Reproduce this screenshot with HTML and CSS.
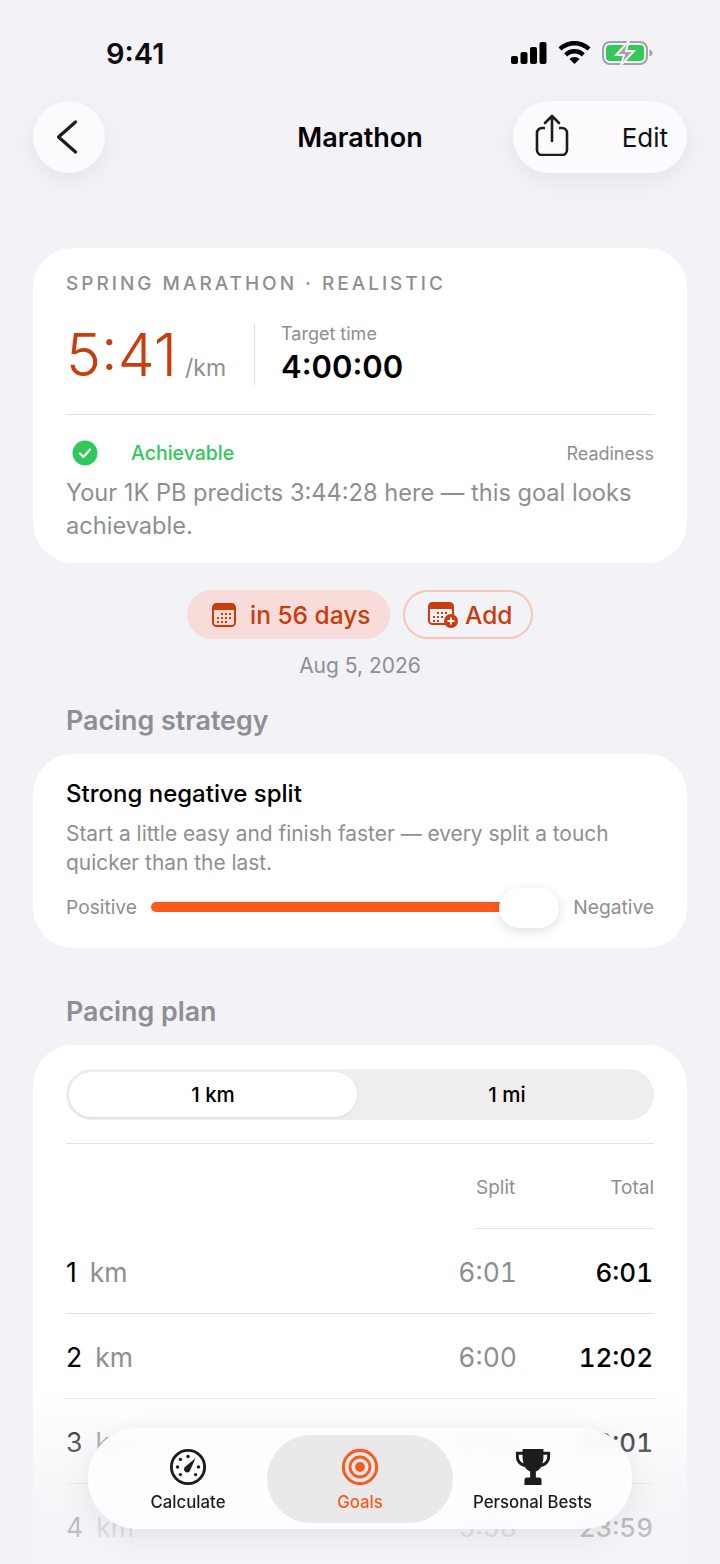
FILE: index.html
```html
<!DOCTYPE html>
<html lang="en">
<head>
<meta charset="UTF-8">
<meta name="viewport" content="width=device-width, initial-scale=1.0">
<title>Marathon</title>
<link rel="stylesheet" href="styles.css">
</head>
<body>
<div id="screen">

    <!-- status bar -->
    <div class="status">
        <span class="clock">9:41</span>
        <div class="status-icons">
            <svg width="36" height="22" viewBox="0 0 36 22"><rect x="0" y="14" width="7" height="8" rx="2"/><rect x="9.500" y="10" width="7" height="12" rx="2"/><rect x="19" y="5" width="7" height="17" rx="2"/><rect x="28.500" y="0" width="7" height="22" rx="2"/></svg>
            <svg width="33" height="23" viewBox="0 0 33 23"><path d="M16.500 0C10 0 4.600 2.500 0.500 6.400l3 3.200C6.800 6.400 11.400 4.400 16.500 4.400s9.700 2 13 5.200l3-3.200C28.400 2.500 23 0 16.500 0z"/><path d="M16.500 8C12.300 8 8.900 9.600 6.200 12.200l3 3.200c1.900-1.800 4.400-3 7.300-3s5.400 1.200 7.300 3l3-3.200C24.100 9.600 20.700 8 16.500 8z"/><path d="M16.500 16c-2 0-3.700.8-5 2l5 5 5-5c-1.300-1.200-3-2-5-2z"/></svg>
            <svg width="51" height="26" viewBox="0 0 51 26"><rect x="1" y="2" width="44" height="22" rx="7" fill="none" stroke="#a3a3a7" stroke-width="2"/><rect x="4" y="5" width="38" height="16" rx="4" fill="#34c759"/><path d="M47.500 9.500c2 .5 3 2 3 3.500s-1 3-3 3.500z" fill="#a3a3a7"/><path d="M27 1 14 15h8l-3 10 13-14h-8z" fill="#a3a3a7" stroke="#f2f2f7" stroke-width="2"/></svg>
        </div>
    </div>

    <!-- nav bar -->
    <div class="nav">
        <div class="nav-left">
            <div class="round-btn">
                <svg width="24" height="34" viewBox="0 0 24 34"><path d="M18.500 2 1.500 17l17 15" fill="none" stroke="#1c1c1e" stroke-width="3.200" stroke-linecap="round" stroke-linejoin="round"/></svg>
            </div>
        </div>
        <div class="nav-title">Marathon</div>
        <div class="pill-btn">
            <svg width="34" height="42" viewBox="0 0 34 42"><path d="M10 14H7a5 5 0 0 0-5 5v17a5 5 0 0 0 5 5h20a5 5 0 0 0 5-5V19a5 5 0 0 0-5-5h-3" fill="none" stroke="#1c1c1e" stroke-width="2.600"/><path d="M17 27V2M10 9l7-7 7 7" fill="none" stroke="#1c1c1e" stroke-width="2.600" stroke-linecap="round" stroke-linejoin="round"/></svg>
            <span>Edit</span>
        </div>
    </div>

    <!-- goal card -->
    <div class="card goal-card">
        <div class="eyebrow">SPRING MARATHON · REALISTIC</div>
        <div class="hero">
            <div class="pace"><span class="pace-num">5:41</span><span class="pace-unit">/km</span></div>
            <div class="target">
                <div class="target-label">Target time</div>
                <div class="target-value">4:00:00</div>
            </div>
        </div>
        <div class="readiness">
            <div class="ready-left">
                <svg width="26" height="26" viewBox="0 0 26 26"><circle cx="13" cy="13" r="12.500" fill="#30c85a"/><path d="M8 13.500l3.500 3.500L18 9.500" fill="none" stroke="#fff" stroke-width="2.200" stroke-linecap="round" stroke-linejoin="round"/></svg>
                <span class="ready-text">Achievable</span>
            </div>
            <span class="ready-label">Readiness</span>
        </div>
        <p class="ready-desc">Your 1K PB predicts 3:44:28 here — this goal looks achievable.</p>
    </div>

    <!-- date pills -->
    <div class="date-pills">
        <div class="date-pill filled">
            <svg width="24" height="24" viewBox="0 0 24 24"><rect x="1" y="1" width="22" height="22" rx="3.500" fill="none" stroke="#c93c0c" stroke-width="2"/><path d="M1 4.500A3.500 3.500 0 0 1 4.500 1h15A3.500 3.500 0 0 1 23 4.500V7H1z" fill="#c93c0c"/><g fill="#c93c0c"><rect x="9" y="10" width="2" height="2"/><rect x="13" y="10" width="2" height="2"/><rect x="17" y="10" width="2" height="2"/><rect x="5" y="14" width="2" height="2"/><rect x="9" y="14" width="2" height="2"/><rect x="13" y="14" width="2" height="2"/><rect x="17" y="14" width="2" height="2"/><rect x="5" y="18" width="2" height="2"/><rect x="9" y="18" width="2" height="2"/><rect x="13" y="18" width="2" height="2"/></g></svg>
            <span>in 56 days</span>
        </div>
        <div class="date-pill outline">
            <svg width="30" height="26" viewBox="0 0 30 26"><rect x="1" y="1" width="24" height="21" rx="3.500" fill="none" stroke="#c93c0c" stroke-width="2"/><path d="M1 4.500A3.500 3.500 0 0 1 4.500 1h17A3.500 3.500 0 0 1 25 4.500V7H1z" fill="#c93c0c"/><g fill="#c93c0c"><rect x="9" y="10" width="2" height="2"/><rect x="13" y="10" width="2" height="2"/><rect x="17" y="10" width="2" height="2"/><rect x="5" y="14" width="2" height="2"/><rect x="9" y="14" width="2" height="2"/><rect x="13" y="14" width="2" height="2"/><rect x="5" y="18" width="2" height="2"/><rect x="9" y="18" width="2" height="2"/></g><circle cx="23" cy="19" r="7" fill="#c93c0c"/><path d="M23 15.500v7M19.500 19h7" stroke="#fff" stroke-width="1.800"/></svg>
            <span>Add</span>
        </div>
    </div>
    <div class="date-text">Aug 5, 2026</div>

    <!-- pacing strategy -->
    <h2 class="section-head strategy-head">Pacing strategy</h2>
    <div class="card strategy-card">
        <div class="strategy-title">Strong negative split</div>
        <p class="strategy-desc">Start a little easy and finish faster — every split a touch quicker than the last.</p>
        <div class="slider-row">
            <span>Positive</span>
            <div class="slider"><div class="thumb"></div></div>
            <span>Negative</span>
        </div>
    </div>

    <!-- pacing plan -->
    <h2 class="section-head plan-head">Pacing plan</h2>
    <div class="card plan-card">
        <div class="segment">
            <div class="seg active">1 km</div>
            <div class="seg other">1 mi</div>
        </div>
        <div class="plan-cols">
            <div class="plan-cols-inner"><span>Split</span><span>Total</span></div>
        </div>
        <div class="row"><div class="row-name"><b>1</b><span>km</span></div><div class="split">6:01</div><div class="total">6:01</div></div>
        <div class="row"><div class="row-name"><b>2</b><span>km</span></div><div class="split">6:00</div><div class="total">12:02</div></div>
        <div class="row"><div class="row-name"><b>3</b><span>km</span></div><div class="split">6:00</div><div class="total">18:01</div></div>
        <div class="row"><div class="row-name"><b>4</b><span>km</span></div><div class="split">5:58</div><div class="total">23:59</div></div>
    </div>

    <!-- fade + tab bar, float over the list -->
    <div class="fade"></div>
    <div class="tabbar">
        <div class="tab first">
            <svg width="38" height="38" viewBox="0 0 40 40"><circle cx="20" cy="20" r="17.500" fill="none" stroke="#1c1c1e" stroke-width="3"/><g fill="#1c1c1e"><circle cx="20" cy="9" r="1.800"/><circle cx="12" cy="12" r="1.800"/><circle cx="9" cy="20" r="1.800"/><circle cx="12" cy="28" r="1.800"/><circle cx="31" cy="20" r="1.800"/><circle cx="28" cy="28" r="1.800"/><path d="M28 10.500 22.500 23a3.400 3.400 0 1 1-4.800-3.700z"/></g></svg>
            <span>Calculate</span>
        </div>
        <div class="tab current">
            <svg width="38" height="38" viewBox="0 0 40 40"><circle cx="20" cy="20" r="17.500" fill="none" stroke="#fa5a1e" stroke-width="3.200"/><circle cx="20" cy="20" r="10.500" fill="none" stroke="#fa5a1e" stroke-width="3"/><circle cx="20" cy="20" r="5.200" fill="#fa5a1e"/></svg>
            <span>Goals</span>
        </div>
        <div class="tab last">
            <svg width="38" height="38" viewBox="0 0 40 40"><path d="M9 1h22v3h7v5c0 6-4 10-9.500 11-1.300 2.500-3.300 4-5.500 4.700V31h3.500c1.500 0 2.500 1 2.500 2.500V39H11v-5.500c0-1.500 1-2.500 2.500-2.500H17v-6.300C14.800 24 12.800 22.500 11.500 20 6 19 2 15 2 9V4h7zM5 7v2c0 3.500 2 6 5 7.200-.6-2-1-4.300-1-7.200V7zm30 0h-4v2c0 2.900-.4 5.200-1 7.200 3-1.200 5-3.700 5-7.200z" fill="#1c1c1e"/></svg>
            <span>Personal Bests</span>
        </div>
    </div>
</div>
</body>
</html>
```

FILE: styles.css
```css
*
{
    box-sizing: border-box;
}
html, body
{
    margin: 0;
    padding: 0;
}
body
{
    font-family: Inter, "Noto Sans", sans-serif;
    color: #000;
}
#screen
{
    position: relative;
    width: 720px;
    height: 1564px;
    overflow: hidden;
    background-color: #f2f2f7;
}

/* status bar */
.status
{
    display: flex;
    justify-content: space-between;
    align-items: center;
    height: 101px;
    padding: 5px 67px 0 106px;
}
.clock
{
    font-size: 29px;
    font-weight: 600;
    color: #0c0c0c;
}
.status-icons
{
    display: flex;
    align-items: center;
    gap: 11px;
    margin-top: -1px;
}

/* nav */
.nav
{
    display: grid;
    grid-template-columns: 174px 1fr 174px;
    height: 72px;
    margin: 0 33px 75px 33px;
}
.round-btn
{
    display: flex;
    align-items: center;
    justify-content: center;
    width: 72px;
    height: 72px;
    border-radius: 50%;
    background-color: #fbfbfe;
    box-shadow: 0 8px 24px rgba(0, 0, 0, 0.06);
}
.nav-title
{
    align-self: center;
    text-align: center;
    font-size: 27px;
    font-weight: 600;
}
.pill-btn
{
    display: flex;
    align-items: center;
    justify-content: space-between;
    height: 72px;
    padding: 0 19px 0 22px;
    border-radius: 36px;
    background-color: #fbfbfe;
    box-shadow: 0 8px 24px rgba(0, 0, 0, 0.06);
    font-size: 26px;
    color: #111;
}
.pill-btn svg
{
    margin-top: -4px;
}

/* cards */
.card
{
    margin: 0 33px;
    padding: 0 33px;
    border-radius: 40px;
    background-color: #fff;
}
.goal-card
{
    height: 315px;
    padding-top: 24px;
}
.eyebrow
{
    font-size: 19px;
    line-height: 24px;
    font-weight: 500;
    letter-spacing: 3px;
    color: #8e8e93;
}
.hero
{
    display: flex;
    align-items: center;
    height: 119px;
    padding: 27px 0 29px 0;
    border-bottom: 1px solid #e3e3e6;
}
.pace
{
    display: flex;
    align-items: baseline;
    width: 189px;
    height: 61px;
    line-height: 61px;
    border-right: 1px solid #dedee0;
}
.pace-num
{
    font-size: 59px;
    font-weight: 300;
    color: #c93c0c;
}
.pace-unit
{
    margin-left: 8px;
    font-size: 23px;
    color: #8e8e93;
}
.target
{
    padding-left: 26px;
}
.target-label
{
    font-size: 18px;
    line-height: 22px;
    color: #8e8e93;
}
.target-value
{
    margin-top: 3px;
    font-size: 31px;
    line-height: 38px;
    font-weight: 600;
}
.readiness
{
    display: flex;
    align-items: center;
    justify-content: space-between;
    height: 26px;
    margin-top: 25px;
}
.ready-left
{
    display: flex;
    align-items: center;
    gap: 33px;
    padding-left: 6px;
}
.ready-text
{
    font-size: 19.500px;
    font-weight: 500;
    color: #30c85a;
}
.ready-label
{
    font-size: 18px;
    color: #8e8e93;
}
.ready-desc
{
    margin: 11px 0 0 0;
    font-size: 23.600px;
    line-height: 32.500px;
    color: #8e8e93;
}

/* date pills */
.date-pills
{
    display: flex;
    justify-content: center;
    gap: 13px;
    margin-top: 27px;
}
.date-pill
{
    display: flex;
    align-items: center;
    height: 49px;
    border-radius: 25px;
    font-size: 24.500px;
    font-weight: 500;
    color: #c93c0c;
}
.date-pill.filled
{
    gap: 14px;
    width: 203px;
    padding-left: 25px;
    background-color: #f7dcd9;
}
.date-pill.outline
{
    gap: 7px;
    width: 130px;
    padding-left: 23px;
    border: 2px solid #f7c6b4;
}
.date-text
{
    margin-top: 14px;
    font-size: 21px;
    line-height: 26px;
    text-align: center;
    color: #8e8e93;
}

/* section heads */
.section-head
{
    margin: 0 0 0 66px;
    font-size: 26.800px;
    line-height: 32px;
    font-weight: 600;
    color: #8e8e93;
}
.strategy-head
{
    margin-top: 25px;
    margin-bottom: 18px;
}
.plan-head
{
    margin-top: 47px;
    margin-bottom: 18px;
}

/* strategy */
.strategy-card
{
    height: 194px;
    padding-top: 25px;
}
.strategy-title
{
    font-size: 24px;
    line-height: 30px;
    font-weight: 500;
}
.strategy-desc
{
    margin: 10px 0 0 0;
    font-size: 20.900px;
    line-height: 29px;
    color: #8e8e93;
}
.slider-row
{
    display: flex;
    align-items: center;
    gap: 14px;
    height: 40px;
    margin-top: 10px;
    font-size: 19.200px;
    color: #8e8e93;
}
.slider
{
    position: relative;
    flex: 1;
    height: 10px;
    border-radius: 5px;
    background-color: #fa5a1e;
}
.thumb
{
    position: absolute;
    right: 0;
    top: -14px;
    width: 60px;
    height: 40px;
    border-radius: 20px;
    background-color: #fff;
    box-shadow: 0 3px 12px rgba(0, 0, 0, 0.13);
}

/* plan */
.plan-card
{
    height: 640px;
    padding-top: 24px;
}
.segment
{
    display: flex;
    height: 51px;
    padding: 3px;
    border-radius: 26px;
    background-color: #eeeeef;
}
.seg
{
    display: flex;
    align-items: center;
    justify-content: center;
    flex: 1;
    font-size: 20.500px;
    font-weight: 500;
}
.seg.active
{
    flex: 0 0 288px;
    border-radius: 23px;
    background-color: #fff;
    box-shadow: 0 1px 3px rgba(0, 0, 0, 0.08);
}
.seg.other
{
    padding-left: 6px;
}
.plan-cols
{
    display: flex;
    justify-content: flex-end;
    margin-top: 23px;
    border-top: 1px solid #e3e3e6;
    padding-top: 1px;
}
.plan-cols-inner
{
    display: flex;
    justify-content: space-between;
    width: 178px;
    height: 84px;
    padding-top: 31px;
    border-bottom: 1px solid #e3e3e6;
    font-size: 19px;
    line-height: 24px;
    color: #8e8e93;
}
.plan-cols-inner span:first-child
{
    width: 40px;
}
.row
{
    display: grid;
    grid-template-columns: 1fr 60px 136px;
    align-items: center;
    height: 85px;
    padding: 2px 1px 0 0;
    border-bottom: 1px solid #e3e3e6;
    font-size: 26.500px;
    font-variant-numeric: tabular-nums;
}
.row-name
{
    display: flex;
    gap: 13px;
    font-variant-numeric: normal;
}
.row-name b
{
    font-weight: 400;
}
.row-name span
{
    color: #8e8e93;
}
.split
{
    text-align: right;
    color: #8e8e93;
}
.total
{
    text-align: right;
    font-size: 26px;
    font-weight: 500;
}

/* fade + tab bar */
.fade
{
    position: absolute;
    left: 0;
    right: 0;
    bottom: 0;
    height: 180px;
    background: linear-gradient(to bottom, rgba(242, 242, 247, 0), rgba(242, 242, 247, 0.75) 70%, rgba(242, 242, 247, 0.85));
}
.tabbar
{
    position: absolute;
    left: 88px;
    top: 1428px;
    display: grid;
    grid-template-columns: 179px 186px 179px;
    align-items: center;
    width: 544px;
    height: 101px;
    border-radius: 50px;
    background-color: rgba(253, 253, 255, 0.93);
    -webkit-backdrop-filter: blur(6px);
    backdrop-filter: blur(6px);
    box-shadow: 0 6px 30px rgba(0, 0, 0, 0.08);
}
.tab
{
    display: flex;
    flex-direction: column;
    align-items: center;
    gap: 6px;
    height: 88px;
    margin-top: 1px;
    padding-top: 13px;
    font-size: 16.800px;
    line-height: 20px;
    font-weight: 500;
    white-space: nowrap;
    color: #1c1c1e;
}
.tab.first
{
    padding-left: 21px;
}
.tab.last
{
    padding-right: 20px;
}
.tab.current
{
    border-radius: 44px;
    background-color: #e9e9eb;
    color: #fa5a1e;
}
```
